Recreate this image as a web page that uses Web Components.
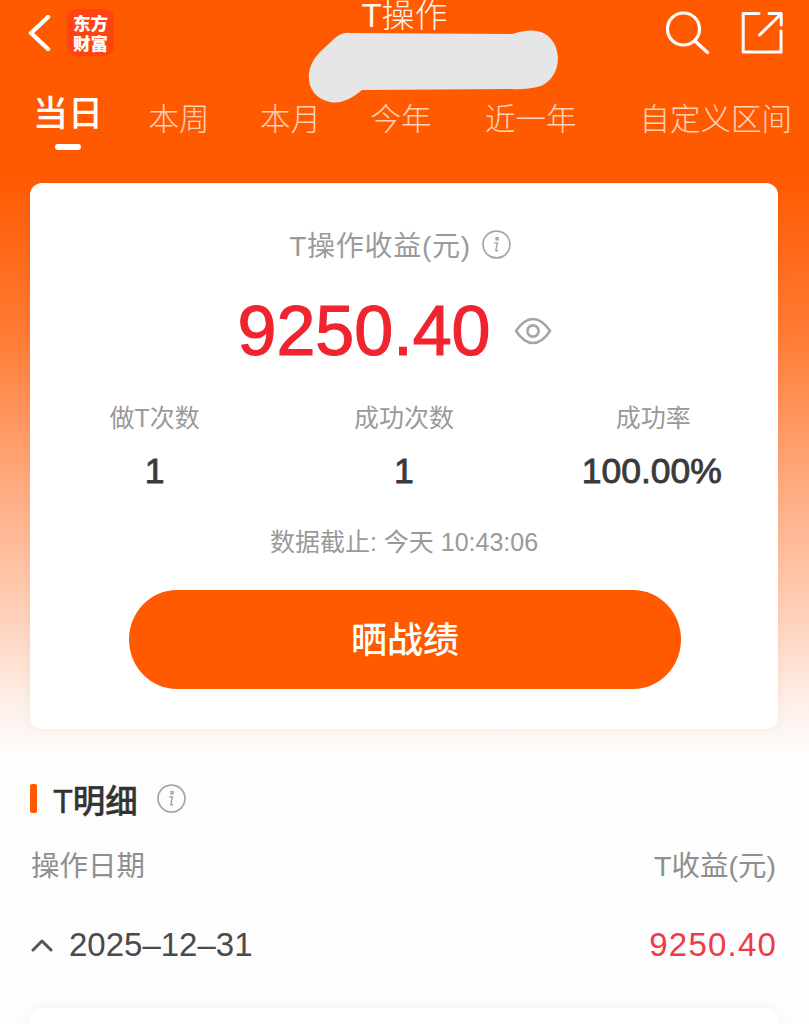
<!DOCTYPE html>
<html lang="zh-CN"><head><meta charset="utf-8"><title>T操作</title>
<style>
html,body{margin:0;padding:0;background:#fdfdfd}
body{font-family:"Liberation Sans","Noto Sans CJK SC",sans-serif;height:1024px;overflow:hidden}
</style></head><body>
<eb-page>
  <eb-topbar></eb-topbar>
  <eb-tabs></eb-tabs>
  <eb-summary></eb-summary>
  <eb-detail></eb-detail>
  <eb-next-card></eb-next-card>
</eb-page>
<script>
const FONT='"Liberation Sans","Noto Sans CJK SC",sans-serif';
const info=(s)=>`<svg width="${s}" height="${s}" viewBox="0 0 28 28" fill="none"><circle cx="14" cy="14" r="13" stroke="#a8a8a8" stroke-width="1.7"/><path d="M13.6 7.4h1.9v2h-1.9zM11.7 12.4h3.2l-1.6 7.2q0 .8 1 .6l1.2-.6" stroke="#a0a0a0" stroke-width="1.3" fill="none"/></svg>`;
function def(name,html){
  customElements.define(name,class extends HTMLElement{
    constructor(){super();this.attachShadow({mode:'open'}).innerHTML=html;}
  });
}
def('eb-page',`<style>:host{display:block;position:relative;height:1024px;overflow:hidden;background:linear-gradient(#ff5a00 0,#ff5a00 175px,#ff7a33 330px,#ffa679 470px,#ffd2bb 620px,#fdf3ee 715px,#fdfdfd 755px)}</style><slot></slot>`);
def('eb-topbar',`<style>
:host{display:grid;grid-template-columns:1fr auto 1fr;align-items:start;height:92px;position:relative;font-family:${FONT}}
.l{display:flex;align-items:center;gap:15px;padding:9px 0 0 28px}
.logo{width:47px;height:47px;border-radius:9px;background:#ff4312;color:#fff;font:900 17.5px/20px "Noto Sans CJK SC",sans-serif;display:flex;align-items:center;justify-content:center;text-align:center}
.t{text-align:center;color:#fff;opacity:.92;font-size:33px;font-weight:300;line-height:32px}
.r{display:flex;justify-content:flex-end;gap:31px;padding:10px 26px 0 0}
.blob{position:absolute;left:300px;top:24px}
</style>
<div class="l"><svg width="24" height="38" viewBox="0 0 24 38" fill="none"><path d="M20 3 3 19l17 16" stroke="#fff" stroke-width="4.4" stroke-linecap="round" stroke-linejoin="round"/></svg><div class="logo"><span>东方<br>财富</span></div></div>
<div class="t">T操作</div>
<div class="r"><svg width="44" height="44" viewBox="0 0 44 44" fill="none"><circle cx="17.5" cy="19" r="16" stroke="#fff" stroke-width="3.2"/><path d="M29 31 41.5 42.5" stroke="#fff" stroke-width="3.4" stroke-linecap="round"/></svg><svg width="42" height="44" viewBox="0 0 42 44" fill="none"><path d="M18 3.5H2.2V42H40V21M18.5 25 40 4M28 3.5h12.2V15" stroke="#fff" stroke-width="3" stroke-linecap="round" stroke-linejoin="round"/></svg></div>
<svg class="blob" width="270" height="85" viewBox="300 24 270 85"><path fill="#e6e6e6" d="M350 33 512 34Q530 28 541 32C563 40 564 76 541 86Q525 90 512 89L362 90Q345 105 330 102C306 97 302 70 320 52L335 38Q342 32 350 33Z"/></svg>`);
def('eb-tab',`<style>
:host{display:flex;flex-direction:column;align-items:center;color:#fff;opacity:.72;font-size:30.5px;font-weight:300;line-height:40px;white-space:nowrap;margin-top:7px}
:host([active]){opacity:1;font-size:35px;font-weight:500;margin-top:2px}
i{display:none;width:26px;height:6px;border-radius:3px;background:#fff;margin-top:10px}
:host([active]) i{display:block}
</style><span><slot></slot></span><i></i>`);
def('eb-tabs',`<style>
:host{display:flex;align-items:flex-start;height:91px;padding-left:33px;box-sizing:border-box;font-family:${FONT}}
.a{margin-left:45.5px}.b{margin-left:50.5px}.c{margin-left:49.5px}.d{margin-left:53.5px}.e{margin-left:63px}
</style>
<eb-tab active>当日</eb-tab><eb-tab class="a">本周</eb-tab><eb-tab class="b">本月</eb-tab><eb-tab class="c">今年</eb-tab><eb-tab class="d">近一年</eb-tab><eb-tab class="e">自定义区间</eb-tab>`);
def('eb-stat',`<style>
:host{display:flex;flex-direction:column;align-items:center;flex:1}
.a{font-size:25px;line-height:34px;color:#9a9a9a}
.b{font:400 35.5px/40px "Liberation Sans",sans-serif;color:#3a3a3a;margin-top:16px;-webkit-text-stroke:.9px #3a3a3a}
:host(.last) .b{margin-right:3px}
</style><div class="a"><slot name="label"></slot></div><div class="b"><slot name="value"></slot></div>`);
def('eb-summary',`<style>
:host{display:block;margin:0 31px 0 30px;height:546px;box-sizing:border-box;background:#fff;border-radius:12px;box-shadow:0 2px 10px rgba(120,60,20,.06);padding-top:43px;font-family:${FONT};text-align:center}
.h{display:flex;justify-content:center;align-items:center;gap:11px;height:36px;font-size:28px;letter-spacing:.7px;color:#9a9a9a;padding-right:8px}
.n{display:flex;justify-content:center;align-items:center;gap:23px;height:80px;margin-top:29px;padding-right:19px}
.v{font:400 70px/80px "Liberation Sans",sans-serif;color:#f0242f;-webkit-text-stroke:1.2px #f0242f}
.st{display:flex;margin:30px 0 0}
.d{margin-top:34px;font-size:25px;line-height:34px;color:#9a9a9a}
.btn{margin:31px 97px 0 99px;height:99px;box-sizing:border-box;padding-bottom:5px;border-radius:48px/50%;background:#ff5a00;color:#fff;font-size:36px;font-weight:500;display:flex;align-items:center;justify-content:center}
</style>
<div class="h"><span>T操作收益(元)</span>${info(29)}</div>
<div class="n"><span class="v">9250.40</span><svg width="38" height="30" viewBox="0 0 38 30" fill="none"><path d="M2 15Q10 3 19 3t17 12Q28 27 19 27T2 15Z" stroke="#a6a6a6" stroke-width="2.6" stroke-linejoin="round"/><circle cx="19" cy="15" r="5.6" stroke="#a6a6a6" stroke-width="2.6"/></svg></div>
<div class="st">
<eb-stat><span slot="label">做T次数</span><span slot="value">1</span></eb-stat>
<eb-stat><span slot="label">成功次数</span><span slot="value">1</span></eb-stat>
<eb-stat class="last"><span slot="label">成功率</span><span slot="value">100.00%</span></eb-stat>
</div>
<div class="d">数据截止: 今天 10:43:06</div>
<div class="btn">晒战绩</div>`);
def('eb-detail',`<style>
:host{display:block;padding:0 33px 0 30px;font-family:${FONT}}
.t{display:flex;align-items:center;height:40px;margin-top:49px;font-size:32.5px;color:#333}
.t b{width:7px;height:29px;border-radius:2px;background:#ff5a00;margin-right:16px}
.t span{font-weight:500;margin-right:19px;-webkit-text-stroke:.4px #333}
.row{display:flex;justify-content:space-between;align-items:center}
.hd{font-size:28.5px;color:#8f8f8f;height:40px;margin-top:25px;padding-left:1px}
.it{font-size:33px;height:40px;margin-top:42px;color:#4a4a4a}
.l{display:flex;align-items:center;gap:16px;font-family:"Liberation Sans",sans-serif}
.l svg{margin-left:1px}
.m{color:#ee3b45;letter-spacing:1.2px;margin-right:-1px}
</style>
<div class="t"><b></b><span>T明细</span>${info(29)}</div>
<div class="row hd"><span>操作日期</span><span>T收益(元)</span></div>
<div class="row it"><span class="l"><svg width="22" height="14" viewBox="0 0 22 14" fill="none"><path d="M2 12 11 3l9 9" stroke="#555" stroke-width="3" stroke-linecap="round" stroke-linejoin="round"/></svg>2025–12–31</span><span class="m">9250.40</span></div>`);
def('eb-next-card',`<style>:host{display:block;margin:43px 31px 0 30px;height:80px;background:#fff;border-radius:12px;box-shadow:0 0 14px rgba(0,0,0,.05)}</style>`);
</script>
</body></html>
